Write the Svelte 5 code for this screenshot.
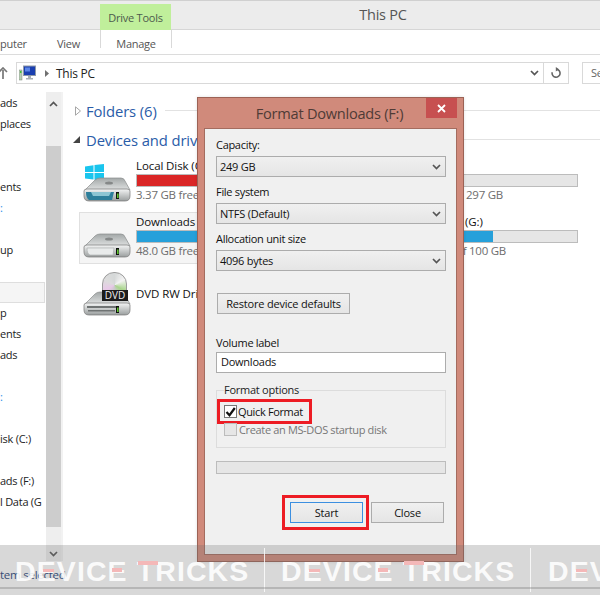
<script>
  const navRows = ['ads', 'places', '', '', 'ents', ':', '', 'up', '', '', 'p', 'ents', 'ads', '', ':', '', 'isk (C:)', '', 'ads (F:)', 'l Data (G'];
  const selects = [
    { label: 'Capacity:', value: '249 GB' },
    { label: 'File system', value: 'NTFS (Default)' },
    { label: 'Allocation unit size', value: '4096 bytes' },
  ];
  // pink accents on the watermark letters, relative to the start of each mark
  const tints = [
    { dx: 28, top: 24, w: 11, h: 3 },
    { dx: 97, top: 23, w: 10, h: 4 },
    { dx: 123, top: 16, w: 20, h: 4 },
  ];
</script>

{#snippet chevron(cls)}
  <svg class={cls} viewBox="0 0 9 6" width="9" height="6" aria-hidden="true">
    <path d="M1 1l3.5 3.5L8 1" fill="none" stroke="#555" stroke-width="1.7" />
  </svg>
{/snippet}

{#snippet drive(front)}
  <svg class="drive-body" viewBox="0 0 48 26" width="48" height="26" aria-hidden="true">
    <defs>
      <linearGradient id="top-{front}" x1="0" y1="0" x2="0" y2="1">
        <stop offset="0" stop-color="#a3a8a8" />
        <stop offset="1" stop-color="#e4e6e6" />
      </linearGradient>
      <linearGradient id="front-{front}" x1="0" y1="0" x2="0" y2="1">
        <stop offset="0" stop-color="#f4f5f5" />
        <stop offset="1" stop-color="#9a9e9e" />
      </linearGradient>
    </defs>
    <path d="M1 14L12 3Q14 1 17 1H38Q41 1 42 4L47 13Z" fill="url(#top-{front})" stroke="#8a8d8d" stroke-width=".7" />
    <ellipse cx="26" cy="6" rx="4" ry="1.6" fill="#858888" />
    <path d="M1 14Q1 12 4 12H44Q47 12 47 14V19Q47 24 42 24H6Q1 24 1 19Z" fill="url(#front-{front})" stroke="#777" stroke-width=".7" />
    {#if front === 'os'}
      <path d="M3 15H31L29 23H6Q3 21 3 15Z" fill="#2d7f9b" />
      <path d="M8 15H28L26 19H10Z" fill="#8cc5d3" />
    {:else if front === 'dvd'}
      <path d="M4 15H33V17H4ZM5 19H32V20.5H5Z" fill="#6f7373" />
    {:else}
      <path d="M4 15H31L30 22H7Q4 21 4 15Z" fill="#e9ebeb" stroke="#a8abab" stroke-width=".6" />
    {/if}
    <rect x="33" y="15" width="3" height="7" fill="#111" />
    <rect x="34" y="16.5" width="1.6" height="4.5" fill="#5fc22f" />
  </svg>
{/snippet}

<div class="screen">
  <header class="titlebar">
    <div class="context-tab">Drive Tools</div>
    <div class="window-title">This PC</div>
  </header>

  <nav class="ribbon">
    <span class="tab computer">puter</span>
    <span class="tab view">View</span>
    <span class="tab manage">Manage</span>
  </nav>

  <div class="address-row">
    <svg class="up" viewBox="0 0 8 12" width="8" height="12" aria-hidden="true">
      <path d="M3 12V3M-1 5l4-4 4 4" fill="none" stroke="#777" stroke-width="1.7" />
    </svg>
    <div class="address">
      <svg viewBox="0 0 17 16" width="17" height="16" aria-hidden="true">
        <rect x="0" y="5" width="3" height="10" fill="#b9cdb4" stroke="#7c8a7c" stroke-width=".5" />
        <rect x="1" y="6" width="1.5" height="2" fill="#46c23c" />
        <rect x="4.5" y="1" width="12" height="9.5" fill="#1a3fb0" stroke="#8f9aa8" />
        <rect x="6" y="2.5" width="5" height="4" fill="#5b86e8" />
        <path d="M9 11h3v2h2v1.5H7V13h2z" fill="#a9afb5" />
      </svg>
      <svg class="crumb" viewBox="0 0 4 7" width="4" height="7" aria-hidden="true"><path d="M0 0l4 3.5L0 7z" fill="#707070" /></svg>
      <span class="crumb-text">This PC</span>
      <span class="spacer"></span>
      {@render chevron('address-chevron')}
      <span class="refresh">
        <svg viewBox="0 0 12 12" width="12" height="12" aria-hidden="true">
          <path d="M6.5 2.2A4 4 0 1 1 2.2 5.2" fill="none" stroke="#666" stroke-width="1.6" />
          <path d="M5.8 0l3.2 2.3L5.8 4.6z" fill="#666" />
        </svg>
      </span>
    </div>
    <div class="search">Se</div>
  </div>

  <div class="body">
    <aside class="nav">
      {#each navRows as row, i}
        <div class="nav-row" class:selected={i === 9} class:link={row === ':'}>{row}</div>
      {/each}
    </aside>

    <div class="scrollbar">
      <svg class="scroll-arrow" viewBox="0 0 9 6" width="9" height="6" aria-hidden="true">
        <path d="M1 5l3.5-3.5L8 5" fill="none" stroke="#555" stroke-width="1.7" />
      </svg>
      <div class="thumb"></div>
      {@render chevron('scroll-arrow-down')}
    </div>

    <main class="content">
      <div class="group-head folders">
        <svg viewBox="0 0 6 10" width="6" height="10" aria-hidden="true"><path d="M.5.8l5 4.2-5 4.2z" fill="#fff" stroke="#a6a6a6" /></svg>
        <span>Folders (6)</span>
        <i></i>
      </div>
      <div class="group-head devices">
        <svg viewBox="0 0 7 7" width="7" height="7" aria-hidden="true"><path d="M7 0v7H0z" fill="#444" /></svg>
        <span>Devices and drives</span>
        <i></i>
      </div>

      <div class="tiles">
        <div class="tile">
          <div class="icon">
            <svg class="win" viewBox="0 0 19 17" width="19" height="17" aria-hidden="true">
              <path d="M0 2.5L8.5 1.2V8H0zM9.5 1L19 0V8H9.5zM0 9H8.5V15.6L0 14.5zM9.5 9H19V17L9.5 15.8z" fill="#19c5ee" />
            </svg>
            {@render drive('os')}
          </div>
          <div class="info">
            <div class="name">Local Disk (C:)</div>
            <div class="bar"><b class="red" style="width: 99%"></b></div>
            <div class="free">3.37 GB free of 297 GB</div>
          </div>
        </div>

        <div class="side-tile">
          <div class="name">&nbsp;</div>
          <div class="bar"></div>
          <div class="free total">297 GB</div>
        </div>

        <div class="tile current">
          <div class="icon">{@render drive('plain')}</div>
          <div class="info">
            <div class="name">Downloads (F:)</div>
            <div class="bar"><b class="blue" style="width: 81%"></b></div>
            <div class="free">48.0 GB free of 249 GB</div>
          </div>
        </div>

        <div class="side-tile">
          <div class="name letter">(G:)</div>
          <div class="bar"><b class="blue" style="width: 52%"></b></div>
          <div class="free of">of 100 GB</div>
        </div>

        <div class="tile dvd">
          <div class="icon">
            <div class="disc"></div>
            <div class="dvd-label">DVD</div>
            {@render drive('dvd')}
          </div>
          <div class="info"><div class="name">DVD RW Drive (D:)</div></div>
        </div>
      </div>
    </main>
  </div>

  <footer class="status">tem selected</footer>

  <section class="dialog">
    <div class="dialog-title">Format Downloads (F:)</div>
    <button class="dialog-close" aria-label="Close">
      <svg viewBox="0 0 9 9" width="9" height="9" aria-hidden="true"><path d="M1 1l7 7M8 1L1 8" stroke="#fff" stroke-width="1.8" /></svg>
    </button>
    <div class="dialog-body">
      {#each selects as s}
        <label class="field-label" for={s.label}>{s.label}</label>
        <div class="select" id={s.label}>
          <span>{s.value}</span>
          {@render chevron('select-chevron')}
        </div>
      {/each}

      <button class="btn restore">Restore device defaults</button>

      <label class="field-label volume" for="volume">Volume label</label>
      <div class="input" id="volume">Downloads</div>

      <fieldset class="options">
        <legend>Format options</legend>
        <div class="check-row highlight">
          <span class="checkbox">
            <svg viewBox="0 0 11 10" width="11" height="10" aria-hidden="true"><path d="M1.5 5l3 3.2L9.8 1" fill="none" stroke="#111" stroke-width="2.2" /></svg>
          </span>
          <span>Quick Format</span>
        </div>
        <div class="check-row disabled">
          <span class="checkbox"></span>
          <span>Create an MS-DOS startup disk</span>
        </div>
      </fieldset>

      <div class="progress"></div>

      <div class="actions">
        <div class="highlight start-mark"><button class="btn primary">Start</button></div>
        <button class="btn close">Close</button>
      </div>
    </div>
  </section>

  <div class="watermark">
    {#each [-251, 15, 281, 548] as x}
      <span class="mark" style="left: {x}px">DEVICE TRICKS</span>
      {#each tints as t}
        <i class="tint" style="left: {x + t.dx}px; top: {t.top}px; width: {t.w}px; height: {t.h}px"></i>
      {/each}
      <i class="mark-sep" style="left: {x + 249}px"></i>
    {/each}
    <div class="mark-line"></div>
  </div>
</div>

<style>
  :global(body) {
    margin: 0;
    background: #fff;
  }

  .screen {
    position: relative;
    width: 600px;
    height: 595px;
    overflow: hidden;
    background: #fff;
    color: #111;
    font-family: "Open Sans", "Noto Sans", sans-serif;
    font-size: 11px;
    letter-spacing: -0.25px;
    display: flex;
    flex-direction: column;
  }

  .titlebar {
    flex: none;
    height: 30px;
    box-sizing: border-box;
    border-top: 1px solid #d0d0d0;
    border-bottom: 1px solid #d6d6d6;
    background: #ececec;
    display: flex;
    padding-top: 3px;
    padding-left: 100px;
  }
  .context-tab {
    flex: none;
    width: 71px;
    height: 26px;
    background: #c0ef9b;
    color: #4d5a4d;
    text-align: center;
    line-height: 27px;
  }
  .window-title {
    flex: none;
    width: 424px;
    margin-top: -3px;
    line-height: 28px;
    font-size: 14.5px;
    text-align: center;
    color: #555;
  }

  .ribbon {
    flex: none;
    height: 25px;
    box-sizing: border-box;
    border-bottom: 1px solid #dcdcdc;
    display: flex;
    color: #555;
    line-height: 27px;
  }
  .tab.computer { width: 57px; }
  .tab.view { width: 43px; }
  .tab.manage {
    width: 70px;
    height: 18px;
    line-height: 27px;
    text-align: center;
    border-left: 1px solid #d9d9d9;
    border-right: 1px solid #d9d9d9;
  }

  .address-row {
    flex: none;
    height: 37px;
    box-sizing: border-box;
    padding-top: 7px;
    display: flex;
    align-items: flex-start;
  }
  .up { margin-top: 5px; width: 8px; flex: none; margin-right: 8px; }
  .address {
    flex: none;
    width: 553px;
    height: 22px;
    box-sizing: border-box;
    border: 1px solid #d9d9d9;
    display: flex;
    align-items: center;
    padding-left: 2px;
    font-size: 12px;
  }
  .crumb { margin-left: 9px; }
  .crumb-text { margin-left: 7px; color: #222; }
  .spacer { flex: 1; }
  :global(.address-chevron) { margin-right: 4px; }
  .refresh {
    width: 24px;
    height: 20px;
    border-left: 1px solid #d9d9d9;
    display: flex;
    align-items: center;
    justify-content: center;
  }
  .search {
    flex: none;
    width: 40px;
    height: 22px;
    box-sizing: border-box;
    margin-left: 13px;
    border: 1px solid #d9d9d9;
    padding-left: 8px;
    line-height: 19px;
    color: #666;
  }

  .body {
    flex: 1;
    min-height: 0;
    display: flex;
  }
  .nav {
    width: 46px;
    flex: none;
    padding-top: 1px;
  }
  .nav-row {
    height: 21px;
    line-height: 20px;
    white-space: nowrap;
    overflow: hidden;
    font-size: 11px;
    color: #222;
    box-sizing: border-box;
  }
  .nav-row.selected {
    margin-right: 1px;
    background: #f5f5f5;
    border: 1px solid #dedede;
    border-left: 0;
  }
  .nav-row.link { color: #2a8fe8; }

  .scrollbar {
    position: relative;
    width: 15px;
    flex: none;
    background: #eeeeee;
    border-right: 2px solid #f2f2f2;
    display: flex;
    flex-direction: column;
    height: 469px;
  }
  .scroll-arrow {
    margin: 9px 3px 0;
    flex: none;
  }
  .thumb {
    margin-top: 39px;
    height: 381px;
    background: #cdcdcd;
    flex: none;
  }
  :global(.scroll-arrow-down) {
    margin: 24px 3px 0;
    flex: none;
  }

  .content {
    flex: 1;
    min-width: 0;
    padding-left: 12px;
    padding-top: 4px;
  }
  .group-head {
    display: flex;
    align-items: center;
    height: 29px;
    color: #2a5ca8;
    font-size: 14.8px;
    white-space: nowrap;
    gap: 5px;
    letter-spacing: -0.1px;
  }
  .group-head i {
    flex: 1;
    height: 1px;
    background: #e2e2e2;
    margin-left: 3px;
  }
  .group-head.devices { margin-left: -2px; gap: 6px; }

  .tiles {
    margin: 2px 0 0 4px;
    display: grid;
    grid-template-columns: 321px 178px;
    grid-auto-rows: 52px;
    row-gap: 4px;
  }
  .tile {
    display: flex;
    box-sizing: border-box;
    border: 1px solid transparent;
    padding-left: 3px;
    gap: 5px;
    margin-right: 6px;
  }
  .tile.current {
    background: #f5f5f5;
    border-color: #e0e0e0;
  }
  .icon {
    position: relative;
    width: 48px;
    height: 50px;
    flex: none;
  }
  :global(.drive-body) { position: absolute; left: 0; top: 20px; }
  .tile.dvd :global(.drive-body) { top: 22px; }
  .win { position: absolute; left: 2px; top: 7px; }
  .info { flex: 1; min-width: 0; }
  .name { font-size: 11.5px; line-height: 17px; color: #111; white-space: nowrap; letter-spacing: -0.1px; }
  .bar {
    height: 13px;
    box-sizing: border-box;
    background: #e6e6e6;
    border: 1px solid #bcbcbc;
    display: flex;
  }
  .bar b { display: block; height: 100%; }
  .red { background: #da2626; }
  .blue { background: #26a0da; }
  .free { color: #6d6d6d; font-size: 11.5px; line-height: 16px; white-space: nowrap; }
  .tile.dvd .name { line-height: 45px; padding-top: 2px; }

  .side-tile { padding-top: 1px; }
  .name.letter { padding-left: 65px; }
  .free.total { padding-left: 66px; }
  .free.of { padding-left: 56px; }

  .disc {
    position: absolute;
    left: 19px;
    top: 3px;
    width: 25px;
    height: 26px;
    border-radius: 12px 12px 0 0;
    background: conic-gradient(#d5d8d8, #f3f3f3, #a8d58b, #c9c9c9, #e8c8e8, #dcdcdc, #d5d8d8);
    border: 1px solid #9c9c9c;
    box-sizing: border-box;
  }
  .dvd-label {
    position: absolute;
    z-index: 1;
    left: 19px;
    top: 21px;
    width: 26px;
    height: 11px;
    background: #1b1b1b;
    color: #eee;
    font-size: 10px;
    line-height: 11px;
    text-align: center;
    letter-spacing: 0;
  }

  .dialog {
    position: absolute;
    z-index: 2;
    left: 197px;
    top: 97px;
    width: 267px;
    height: 465px;
    box-sizing: border-box;
    border: 1px solid #9c6255;
    background: #d08a7b;
    padding: 30px 6px 6px 6px;
    box-shadow: 0 0 3px rgba(0, 0, 0, 0.12);
  }
  .dialog-title {
    position: absolute;
    top: 0;
    left: -2px;
    right: 0;
    text-align: center;
    line-height: 30px;
    font-size: 14.6px;
    color: #4f3b36;
  }
  .dialog-close {
    position: absolute;
    top: 0;
    right: 6px;
    width: 31px;
    height: 20px;
    border: 0;
    padding: 0;
    background: #c75050;
    display: flex;
    align-items: center;
    justify-content: center;
  }
  .dialog-body {
    height: 100%;
    box-sizing: border-box;
    background: #f0f0f0;
    border: 1px solid #a46c5f;
    padding: 6px 11px 0 11px;
    display: flex;
    flex-direction: column;
    align-items: flex-start;
  }
  .field-label {
    line-height: 19px;
    height: 19px;
    color: #111;
    margin-bottom: 2px;
    margin-top: 5px;
    letter-spacing: -0.3px;
  }
  .field-label:first-child { margin-top: 0; }
  .select {
    width: 230px;
    height: 21px;
    flex: none;
    box-sizing: border-box;
    border: 1px solid #acacac;
    background: linear-gradient(#f0f0f0, #e5e5e5);
    display: flex;
    align-items: center;
    justify-content: space-between;
    padding: 0 4px 0 3px;
    line-height: 19px;
  }
  .btn {
    font: inherit;
    letter-spacing: -0.2px;
    color: #111;
    border: 1px solid #acacac;
    background: linear-gradient(#f0f0f0, #e5e5e5);
    padding: 0;
    height: 21px;
    box-sizing: border-box;
  }
  .restore {
    width: 133px;
    margin: 22px 0 0 1px;
  }
  .field-label.volume { margin-top: 19px; margin-bottom: 0; }
  .input {
    width: 230px;
    height: 21px;
    flex: none;
    box-sizing: border-box;
    border: 1px solid #acacac;
    background: #fff;
    padding-left: 4px;
    line-height: 18px;
  }
  .options {
    width: 230px;
    height: 65px;
    flex: none;
    box-sizing: border-box;
    margin: 10px 0 0;
    padding: 0 0 0 7px;
    border: 1px solid #dcdcdc;
    min-width: 0;
  }
  .options legend {
    padding: 0;
    line-height: 14px;
    height: 14px;
    color: #222;
  }
  .check-row {
    display: flex;
    align-items: center;
    gap: 2px;
    white-space: nowrap;
    letter-spacing: -0.35px;
  }
  .checkbox {
    width: 13px;
    height: 13px;
    box-sizing: border-box;
    border: 1px solid #777;
    background: #fff;
    display: flex;
    align-items: center;
    justify-content: center;
    flex: none;
  }
  .check-row.highlight {
    width: 95px;
    height: 25px;
    box-sizing: border-box;
    margin: 2px 0 0 -7px;
    padding-left: 4px;
    gap: 1px;
    border: 3px solid #ed1c24;
  }
  .check-row.disabled {
    height: 13px;
    margin-top: -1px;
    color: #777;
  }
  .check-row.disabled .checkbox {
    background: #e6e6e6;
    border-color: #bcbcbc;
  }
  .progress {
    width: 230px;
    height: 13px;
    flex: none;
    box-sizing: border-box;
    margin-top: 13px;
    background: #e6e6e6;
    border: 1px solid #bcbcbc;
  }
  .actions {
    display: flex;
    align-items: center;
    margin-top: 21px;
    margin-left: 66px;
    gap: 2px;
  }
  .start-mark {
    width: 87px;
    height: 35px;
    box-sizing: border-box;
    border: 3px solid #ed1c24;
    display: flex;
    align-items: center;
    padding-left: 5px;
  }
  .primary {
    width: 73px;
    border-color: #3c8fe0;
  }
  .close { width: 73px; }

  .status {
    position: absolute;
    left: 0;
    top: 566px;
    line-height: 18px;
    font-size: 11.5px;
    color: #1d3f78;
  }

  .watermark {
    position: absolute;
    z-index: 3;
    left: 0;
    right: 0;
    top: 545px;
    bottom: 0;
    background: rgba(110, 110, 110, 0.27);
    overflow: hidden;
  }
  .mark {
    position: absolute;
    top: 12px;
    color: rgba(255, 255, 255, 0.88);
    font-family: "Liberation Sans", sans-serif;
    font-weight: 700;
    font-size: 28.5px;
    line-height: 28px;
    letter-spacing: 1.1px;
    white-space: nowrap;
  }
  .tint {
    position: absolute;
    background: #f4b8b8;
  }
  .mark-sep {
    position: absolute;
    top: 3px;
    width: 1px;
    height: 44px;
    background: rgba(255, 255, 255, 0.8);
  }
  .mark-line {
    position: absolute;
    left: 0;
    right: 0;
    top: 42px;
    height: 2px;
    background: rgba(120, 120, 120, 0.35);
  }
</style>
